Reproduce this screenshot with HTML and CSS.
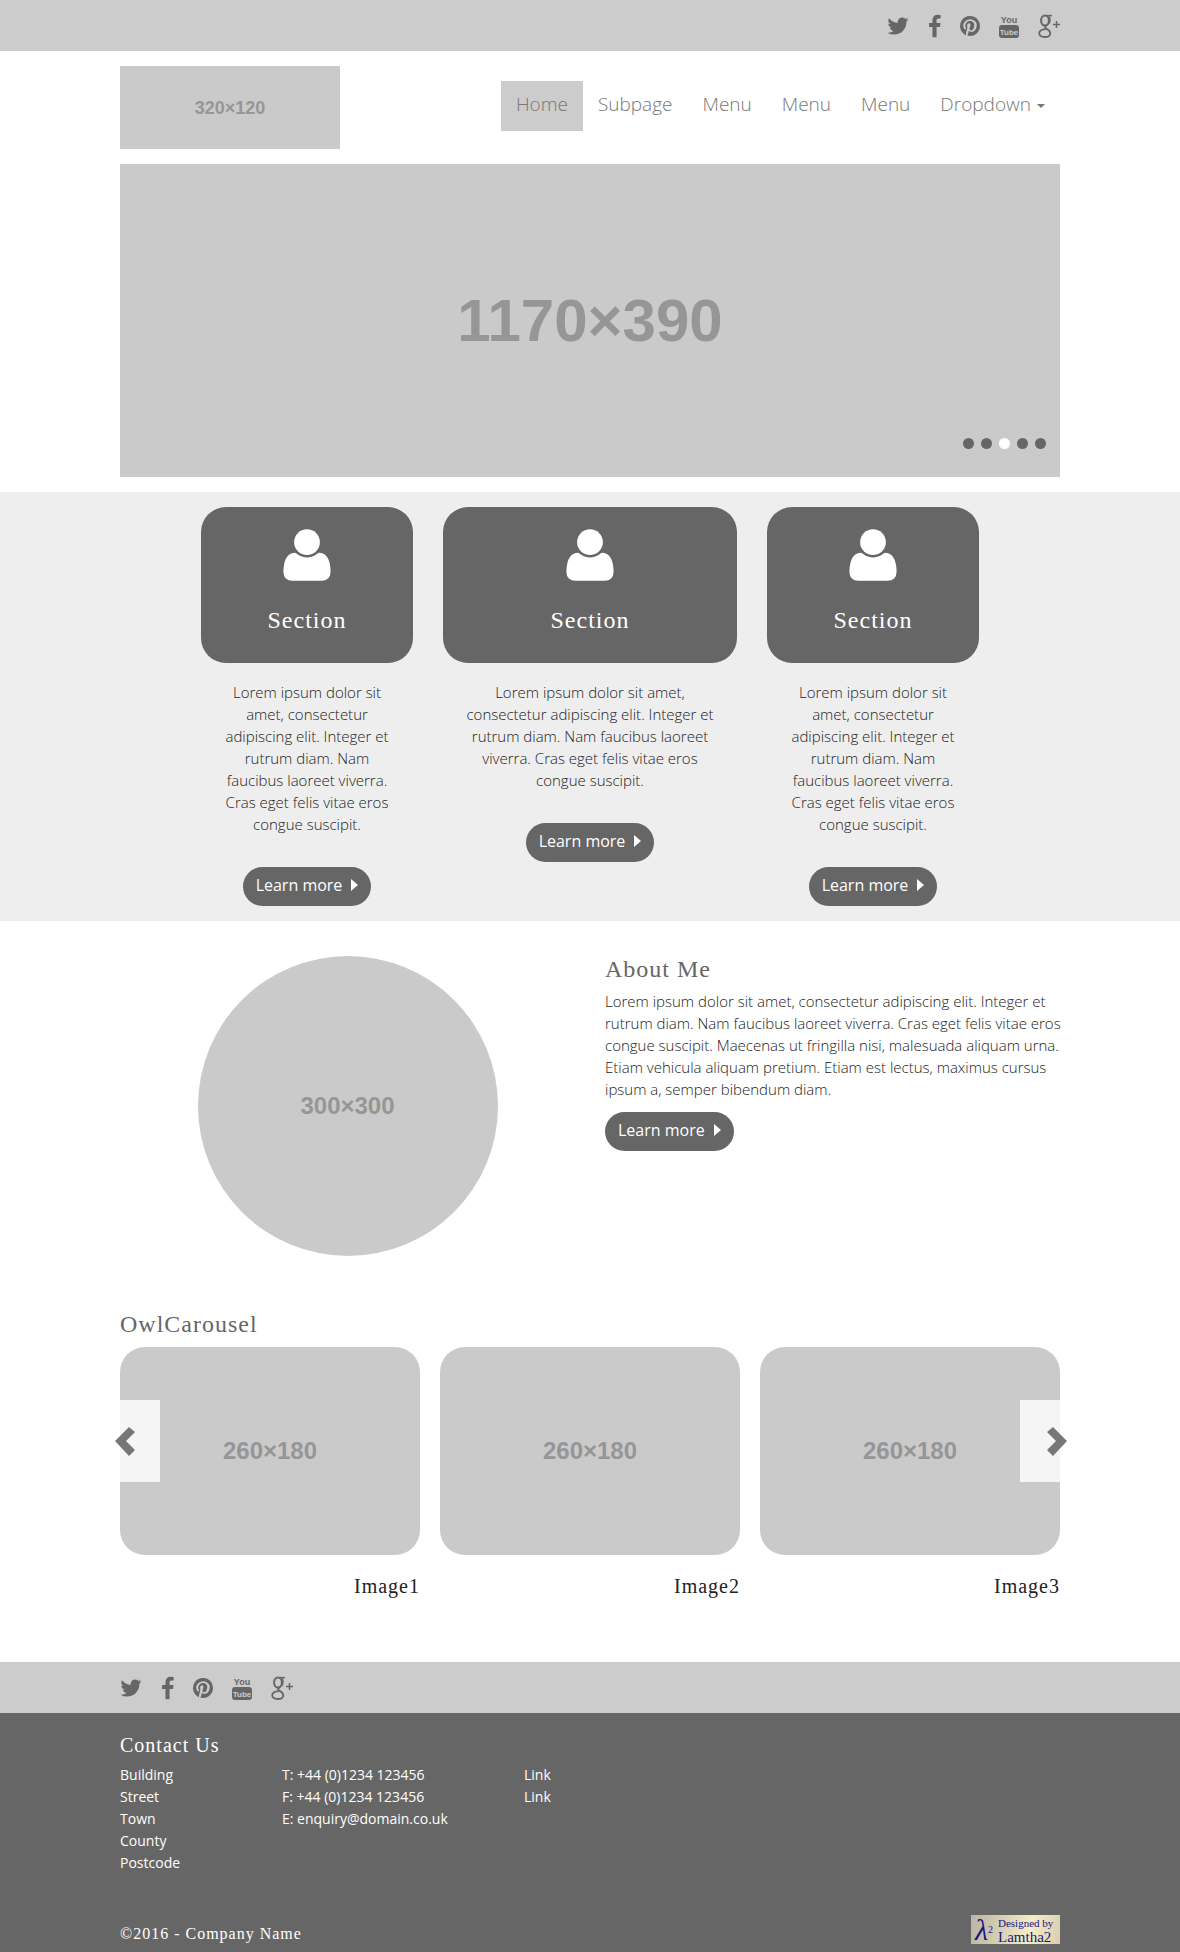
FILE: index.html
```html
<!DOCTYPE html>
<html lang="en">
<head>
<meta charset="utf-8">
<meta name="viewport" content="width=device-width, initial-scale=1">
<title>Company Name</title>
<link rel="stylesheet" href="styles.css">
</head>
<body>
<svg class="sprite" aria-hidden="true">
  <symbol id="twitter" viewBox="75 0 1642 1792"><path d="M1684 408q-67 98-162 167 1 14 1 42 0 130-38 259.5t-115.5 248.5-184.5 210.5-258 146-323 54.5q-271 0-496-145 35 4 78 4 225 0 401-138-105-2-188-64.5t-114-159.5q33 5 61 5 43 0 85-11-112-23-185.5-111.5t-73.5-205.5v-4q68 38 146 41-66-44-105-115t-39-154q0-88 44-163 121 149 294.5 238.5t371.5 99.5q-8-38-8-74 0-134 94.5-228.5t228.5-94.5q140 0 236 102 109-21 205-78-37 115-142 178 93-10 186-50z"/></symbol>
  <symbol id="facebook" viewBox="400 0 971 1792"><path d="M1343 12v264h-157q-86 0-116 36t-30 108v189h293l-39 296h-254v759h-306v-759h-255v-296h255v-218q0-186 104-288.5t277-102.5q147 0 228 12z" transform="translate(0 64)"/></symbol>
  <symbol id="pinterest" viewBox="128 0 1536 1792"><path d="M1664 896q0 209-103 385.5t-279.5 279.5-385.5 103q-111 0-218-32 59-93 78-164 9-34 54-211 20 39 73 67.5t114 28.5q121 0 216-68.5t147-188.5 52-270q0-114-59.5-214t-172.5-163-255-63q-105 0-196 29t-154.5 77-109 110.5-67 129.5-21.5 134q0 104 40 183t117 111q30 12 38-20 2-7 8-31t8-30q6-23-11-43-51-61-51-151 0-151 104.5-259.5t273.5-108.5q151 0 235.5 82t84.5 213q0 170-68.5 289t-175.5 119q-61 0-98-43.5t-23-104.5q8-35 26.5-93.5t30-103 11.5-75.5q0-50-27-83t-77-33q-62 0-105 57t-43 142q0 73 25 122l-99 418q-17 70-13 177-206-91-333-281t-127-423q0-209 103-385.5t279.5-279.5 385.5-103 385.5 103 279.5 279.5 103 385.5z"/></symbol>
  <symbol id="gplus" viewBox="0 0 22 24"><g fill="none" stroke="currentColor"><path d="M14 1.6H8.200" stroke-width="1.500"/><ellipse cx="7" cy="6.500" rx="3.900" ry="5" stroke-width="2"/><path d="M8.500 11.400c-2 1.200-1.800 2.200.1 3.400 2.300 1.500 3.700 2.400 3.700 4.400 0 2.300-2.200 3.800-5.500 3.800-3.400 0-5.600-1.400-5.600-3.700 0-2.800 3-4 6.900-4.200" stroke-width="1.800"/><path d="M11 2.500c1.300 1.200 1.500 6-.6 7.400" stroke-width="1.500"/><path d="M15 10.500h7M18.500 7v7" stroke-width="1.500"/></g></symbol>
  <symbol id="user" viewBox="0 0 1792 1792"><path d="M1600 1405q0 120-73 189.500t-194 69.500h-874q-121 0-194-69.500t-73-189.500q0-53 3.500-103.500t14-109 26.500-108.500 43-97.500 62-81 85.500-53.500 111.500-20q9 0 42 21.500t74.500 48 108 48 133.500 21.500 133.500-21.500 108-48 74.500-48 42-21.500q61 0 111.500 20t85.500 53.500 62 81 43 97.500 26.500 108.500 14 109 3.500 103.500z"/><circle cx="896" cy="512" r="384"/></symbol>
  <symbol id="caret" viewBox="0 0 7 12"><path d="M0 0l7 6-7 6z"/></symbol>
  <symbol id="prev" viewBox="0 0 20 30"><path d="M0 15L14 1l6 5-9 9 9 9-6 6z"/></symbol>
  <symbol id="next" viewBox="0 0 20 30"><path d="M20 15L6 1 0 6l9 9-9 9 6 6z"/></symbol>
</svg>

<div class="social-bar">
  <div class="container social social-end">
    <a href="#" aria-label="Twitter"><svg width="22" height="24"><use href="#twitter"/></svg></a>
    <a href="#" aria-label="Facebook"><svg width="13" height="24"><use href="#facebook"/></svg></a>
    <a href="#" aria-label="Pinterest"><svg width="20" height="24"><use href="#pinterest"/></svg></a>
    <a href="#" aria-label="YouTube"><svg width="20" height="24" viewBox="0 0 20 24"><text x="10" y="9" class="yt-you">You</text><rect y="11" width="20" height="13" rx="3"/><text x="10" y="21" class="yt-tube">Tube</text></svg></a>
    <a href="#" aria-label="Google Plus"><svg width="22" height="24"><use href="#gplus"/></svg></a>
  </div>
</div>

<header class="container header">
  <a href="#" class="placeholder logo">320×120</a>
  <nav class="nav">
    <a href="#" class="active">Home</a>
    <a href="#">Subpage</a>
    <a href="#">Menu</a>
    <a href="#">Menu</a>
    <a href="#">Menu</a>
    <a href="#">Dropdown<span class="nav-caret"></span></a>
  </nav>
</header>

<main>
  <div class="container">
    <div class="placeholder hero">1170×390
      <div class="dots">
        <button type="button" aria-label="Slide 1"></button>
        <button type="button" aria-label="Slide 2"></button>
        <button type="button" aria-label="Slide 3" class="on"></button>
        <button type="button" aria-label="Slide 4"></button>
        <button type="button" aria-label="Slide 5"></button>
      </div>
    </div>
  </div>

  <section class="sections">
    <div class="section-grid">
      <article class="section">
        <div class="section-card"><svg width="60" height="60"><use href="#user"/></svg><h2>Section</h2></div>
        <p>Lorem ipsum dolor sit amet, consectetur adipiscing elit. Integer et rutrum diam. Nam faucibus laoreet viverra. Cras eget felis vitae eros congue suscipit.</p>
        <a href="#" class="button">Learn more<svg width="7" height="12"><use href="#caret"/></svg></a>
      </article>
      <article class="section">
        <div class="section-card"><svg width="60" height="60"><use href="#user"/></svg><h2>Section</h2></div>
        <p>Lorem ipsum dolor sit amet, consectetur adipiscing elit. Integer et rutrum diam. Nam faucibus laoreet viverra. Cras eget felis vitae eros congue suscipit.</p>
        <a href="#" class="button">Learn more<svg width="7" height="12"><use href="#caret"/></svg></a>
      </article>
      <article class="section">
        <div class="section-card"><svg width="60" height="60"><use href="#user"/></svg><h2>Section</h2></div>
        <p>Lorem ipsum dolor sit amet, consectetur adipiscing elit. Integer et rutrum diam. Nam faucibus laoreet viverra. Cras eget felis vitae eros congue suscipit.</p>
        <a href="#" class="button">Learn more<svg width="7" height="12"><use href="#caret"/></svg></a>
      </article>
    </div>
  </section>

  <section class="container about">
    <div class="placeholder portrait">300×300</div>
    <div class="about-text">
      <h2>About Me</h2>
      <p>Lorem ipsum dolor sit amet, consectetur adipiscing elit. Integer et rutrum diam. Nam faucibus laoreet viverra. Cras eget felis vitae eros congue suscipit. Maecenas ut fringilla nisi, malesuada aliquam urna. Etiam vehicula aliquam pretium. Etiam est lectus, maximus cursus ipsum a, semper bibendum diam.</p>
      <a href="#" class="button">Learn more<svg width="7" height="12"><use href="#caret"/></svg></a>
    </div>
  </section>

  <section class="container gallery">
    <h2>OwlCarousel</h2>
    <div class="carousel">
      <figure><div class="placeholder slide">260×180</div><figcaption>Image1</figcaption></figure>
      <figure><div class="placeholder slide">260×180</div><figcaption>Image2</figcaption></figure>
      <figure><div class="placeholder slide">260×180</div><figcaption>Image3</figcaption></figure>
      <button type="button" class="arrow arrow-prev" aria-label="Previous"><svg width="20" height="30"><use href="#prev"/></svg></button>
      <button type="button" class="arrow arrow-next" aria-label="Next"><svg width="20" height="30"><use href="#next"/></svg></button>
    </div>
  </section>
</main>

<div class="social-bar">
  <div class="container social">
    <a href="#" aria-label="Twitter"><svg width="22" height="24"><use href="#twitter"/></svg></a>
    <a href="#" aria-label="Facebook"><svg width="13" height="24"><use href="#facebook"/></svg></a>
    <a href="#" aria-label="Pinterest"><svg width="20" height="24"><use href="#pinterest"/></svg></a>
    <a href="#" aria-label="YouTube"><svg width="20" height="24" viewBox="0 0 20 24"><text x="10" y="9" class="yt-you">You</text><rect y="11" width="20" height="13" rx="3"/><text x="10" y="21" class="yt-tube">Tube</text></svg></a>
    <a href="#" aria-label="Google Plus"><svg width="22" height="24"><use href="#gplus"/></svg></a>
  </div>
</div>

<footer class="footer">
  <div class="container">
    <h3>Contact Us</h3>
    <div class="contact">
      <address>Building<br>Street<br>Town<br>County<br>Postcode</address>
      <div>T: +44 (0)1234 123456<br>F: +44 (0)1234 123456<br>E: <a href="mailto:enquiry@domain.co.uk">enquiry@domain.co.uk</a></div>
      <div><a href="#">Link</a><br><a href="#">Link</a></div>
    </div>
    <div class="legal">
      <p>©2016 - Company Name</p>
      <a href="#" class="badge"><span class="badge-mark">λ</span><span class="badge-two">2</span><span class="badge-text"><span>Designed by</span><span class="badge-name">Lamtha2</span></span></a>
    </div>
  </div>
</footer>
</body>
</html>
```
FILE: styles.css
```css
* { box-sizing: border-box; }

body {
  margin: 0;
  background: #fff;
  color: #222;
  font: 300 15px/22px "Open Sans", "Noto Sans", sans-serif;
}

a { color: inherit; text-decoration: none; }
p, h2, h3, figure { margin: 0; }
svg { display: block; fill: currentColor; }
.sprite { position: absolute; width: 0; height: 0; }

h2, h3, figcaption, .legal {
  font-family: "Liberation Serif", "Times New Roman", serif;
  font-weight: 400;
  letter-spacing: 1px;
}
h2 { font-size: 24px; line-height: 26px; color: #666; }

.container { max-width: 970px; margin: 0 auto; padding: 0 15px; }

/* Social links */
.social-bar { background: #ccc; color: #666; padding: 14px 0 13px; }
.social { display: flex; gap: 19px; }
.social-end { justify-content: flex-end; }
.yt-you, .yt-tube {
  font-family: "Liberation Sans Narrow", "Liberation Sans", sans-serif;
  font-weight: 700;
  text-anchor: middle;
}
.yt-you { font-size: 9px; }
.yt-tube { font-size: 8px; fill: #ccc; }

/* Grey image placeholders */
.placeholder {
  display: flex;
  align-items: center;
  justify-content: center;
  background: #cacaca;
  color: #969696;
  font-family: "Liberation Sans Narrow", "Liberation Sans", sans-serif;
  font-weight: 700;
  font-size: 24px;
}

/* Header */
.header {
  display: flex;
  justify-content: space-between;
  align-items: flex-start;
  padding-top: 15px;
  padding-bottom: 15px;
}
.logo { width: 220px; height: 83px; font-size: 18px; }
.nav { display: flex; margin-top: 15px; color: #777; font-size: 19px; line-height: 20px; }
.nav a { padding: 13px 15px 17px; }
.nav .active { background: #ccc; }
.nav-caret {
  display: inline-block;
  margin-left: 6px;
  vertical-align: middle;
  border: 4px solid transparent;
  border-top-color: currentColor;
  border-bottom: 0;
}

.hero { position: relative; aspect-ratio: 3; margin-bottom: 15px; font-size: 60px; }
.dots { position: absolute; right: 14px; bottom: 28px; display: flex; gap: 7px; }
.dots button {
  width: 11px;
  height: 11px;
  padding: 0;
  border: 0;
  border-radius: 50%;
  background: #666;
}
.dots .on { background: #fff; }

/* Three sections */
.sections { background: #eee; padding: 15px; }
.section-grid {
  display: grid;
  grid-template-columns: 212fr 294fr 212fr;
  gap: 30px;
  max-width: 778px;
  margin: 0 auto;
  align-items: start;
}
.section { display: flex; flex-direction: column; align-items: center; text-align: center; }
.section-card {
  display: flex;
  flex-direction: column;
  align-items: center;
  gap: 22px;
  width: 100%;
  padding: 18px 0 30px;
  border-radius: 25px;
  background: #666;
  color: #fff;
}
.section-card h2 { color: #fff; }
.section p { padding: 18px 20px 32px; }

.button {
  display: inline-flex;
  align-items: center;
  gap: 9px;
  padding: 7px 13px 10px;
  border-radius: 20px;
  background: #666;
  color: #fff;
  font-size: 16px;
  font-weight: 400;
}

/* About */
.about {
  display: grid;
  grid-template-columns: 1fr 1fr;
  gap: 30px;
  padding-top: 35px;
  padding-bottom: 55px;
}
.portrait { width: 300px; height: 300px; border-radius: 50%; justify-self: center; }
.about-text h2 { margin-bottom: 8px; }
.about-text p { margin: 0 -10px 12px 0; }

/* Carousel */
.gallery { padding-bottom: 65px; }
.gallery h2 { margin-bottom: 10px; }
.carousel { position: relative; display: grid; grid-template-columns: repeat(3, 1fr); gap: 20px; }
.slide { height: 208px; border-radius: 25px; }
figcaption { margin-top: 20px; font-size: 20px; line-height: 22px; text-align: right; }
.arrow {
  position: absolute;
  top: 53px;
  display: flex;
  align-items: center;
  width: 40px;
  height: 82px;
  padding: 0;
  border: 0;
  background: rgba(255, 255, 255, .8);
  color: #777;
}
.arrow svg { flex: none; }
.arrow-prev { left: 0; }
.arrow-prev svg { margin-left: -5px; }
.arrow-next { right: 0; justify-content: flex-end; }
.arrow-next svg { margin-right: -7px; }

/* Footer */
.footer { background: #666; color: #fff; padding: 21px 0 8px; font-size: 14px; font-weight: 400; }
.footer h3 { margin-bottom: 8px; font-size: 20px; line-height: 22px; }
.contact { display: grid; grid-template-columns: 162px 242px 1fr; }
address { font-style: normal; }
.legal { display: flex; justify-content: space-between; align-items: flex-end; margin-top: 41px; }
.legal p { font-size: 16px; line-height: 20px; }
.badge {
  display: flex;
  align-items: center;
  width: 89px;
  height: 29px;
  padding-left: 4px;
  background: linear-gradient(100deg, #b9b4a6, #d8d0b4 35%, #f5ecc8 65%, #d9cfae);
  color: #1c1480;
  letter-spacing: 0;
  line-height: 14px;
}
.badge-mark { font-size: 30px; font-style: italic; line-height: 28px; }
.badge-two { font-size: 10px; }
.badge-text { display: flex; flex-direction: column; margin-left: 5px; font-size: 11px; }
.badge-name { font-size: 15px; }
```
